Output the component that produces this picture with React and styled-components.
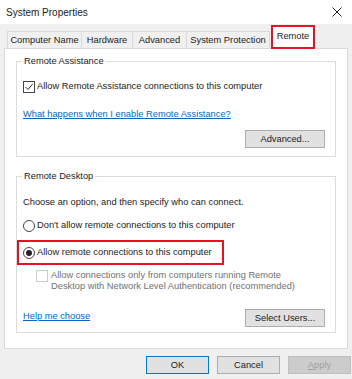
import React from "react";
import styled, { createGlobalStyle } from "styled-components";

const GlobalStyle = createGlobalStyle`
  html, body {
    margin: 0;
    padding: 0;
    background: #f0f0f0;
  }
  * {
    box-sizing: border-box;
  }
`;

const tabs = [
  { label: "Computer Name", width: 75 },
  { label: "Hardware", width: 51 },
  { label: "Advanced", width: 54 },
  { label: "System Protection", width: 83 },
];

export const App = () => {
  return (
    <Window>
      <GlobalStyle />
      <TitleBar>
        <Title>System Properties</Title>
        <CloseIcon viewBox="0 0 10 10">
          <path d="M0.5 0.5 L9.5 9.5 M9.5 0.5 L0.5 9.5" stroke="#222" strokeWidth="1" />
        </CloseIcon>
      </TitleBar>

      <TabRow>
        {tabs.map((tab, i) => (
          <Tab key={tab.label} $w={tab.width} $first={i === 0}>
            {tab.label}
          </Tab>
        ))}
        <ActiveTab>Remote</ActiveTab>
      </TabRow>

      <Panel>
        <Group $h={96}>
          <Legend>Remote Assistance</Legend>
          <OptionRow $top={18}>
            <CheckBox>
              <svg width="10" height="10" viewBox="0 0 10 10">
                <path d="M1.5 5 L4 7.5 L8.8 1.8" fill="none" stroke="#333" strokeWidth="1" />
              </svg>
            </CheckBox>
            <Label>Allow Remote Assistance connections to this computer</Label>
          </OptionRow>
          <LinkText $top={15}>What happens when I enable Remote Assistance?</LinkText>
          <ButtonRow $top={10}>
            <span />
            <Button>Advanced...</Button>
          </ButtonRow>
        </Group>

        <Group $h={157} $top={19}>
          <Legend>Remote Desktop</Legend>
          <Text $top={19}>Choose an option, and then specify who can connect.</Text>
          <OptionRow $top={11}>
            <Radio />
            <Label>Don't allow remote connections to this computer</Label>
          </OptionRow>
          <Highlight>
            <OptionRow>
              <Radio $checked />
              <Label>Allow remote connections to this computer</Label>
            </OptionRow>
          </Highlight>
          <SubOption>
            <CheckBox $disabled />
            <MutedText>
              Allow connections only from computers running Remote
              <br />
              Desktop with Network Level Authentication (recommended)
            </MutedText>
          </SubOption>
          <ButtonRow $top={18}>
            <LinkText $top={1}>Help me choose</LinkText>
            <Button>Select Users...</Button>
          </ButtonRow>
        </Group>
      </Panel>

      <Footer>
        <DialogButton $primary>OK</DialogButton>
        <DialogButton>Cancel</DialogButton>
        <DialogButton $disabled>
          <u>A</u>pply
        </DialogButton>
      </Footer>
    </Window>
  );
};

const Window = styled.div`
  width: 352px;
  height: 379px;
  background: #f0f0f0;
  font-family: "Liberation Sans", Arial, sans-serif;
  font-size: 9.3px;
  color: #222;
  display: flex;
  flex-direction: column;
  overflow: hidden;
`;

const TitleBar = styled.div`
  height: 24px;
  background: #fff;
  display: flex;
  align-items: center;
  justify-content: space-between;
  padding: 0 10px 0 6px;
`;

const Title = styled.div`
  font-size: 10px;
  color: #222;
`;

const CloseIcon = styled.svg`
  width: 10px;
  height: 10px;
`;

const TabRow = styled.div`
  display: flex;
  align-items: flex-end;
  height: 24px;
  padding-left: 7px;
  position: relative;
  z-index: 1;
`;

const Tab = styled.div`
  width: ${(p) => p.$w}px;
  height: 17px;
  border: 1px solid #d9d9d9;
  border-bottom: none;
  border-left-width: ${(p) => (p.$first ? 1 : 0)}px;
  background: #f0f0f0;
  display: flex;
  align-items: center;
  justify-content: center;
  white-space: nowrap;
`;

const ActiveTab = styled.div`
  width: 44px;
  height: 24px;
  margin-left: 1px;
  margin-bottom: -1px;
  border: 2px solid #e81123;
  background: #fff;
  display: flex;
  align-items: center;
  justify-content: center;
  padding-bottom: 2px;
  white-space: nowrap;
`;

const Panel = styled.div`
  height: 301px;
  margin: 0 4px;
  background: #fff;
  border: 1px solid #d9d9d9;
  padding: 12px 11px 0 11px;
  display: flex;
  flex-direction: column;
`;

const Group = styled.div`
  position: relative;
  height: ${(p) => p.$h}px;
  margin-top: ${(p) => p.$top || 0}px;
  border: 1px solid #dcdcdc;
  padding: 0 10px 0 6px;
  display: flex;
  flex-direction: column;
`;

const Legend = styled.div`
  position: absolute;
  top: -7px;
  left: 5px;
  padding: 0 2px;
  background: #fff;
  line-height: 12px;
`;

const OptionRow = styled.div`
  display: flex;
  align-items: center;
  height: 13px;
  gap: 2px;
  margin-top: ${(p) => p.$top || 0}px;
`;

const CheckBox = styled.div`
  width: 12px;
  height: 12px;
  flex: none;
  border: 1px solid ${(p) => (p.$disabled ? "#cccccc" : "#444")};
  background: #fff;
  display: flex;
  align-items: center;
  justify-content: center;
`;

const Radio = styled.div`
  width: 12px;
  height: 12px;
  flex: none;
  border-radius: 50%;
  border: 1px solid #444;
  background: #fff;
  display: flex;
  align-items: center;
  justify-content: center;
  &::after {
    content: "";
    display: ${(p) => (p.$checked ? "block" : "none")};
    width: 6px;
    height: 6px;
    border-radius: 50%;
    background: #222;
  }
`;

const Label = styled.span`
  white-space: nowrap;
  line-height: 13px;
`;

const Text = styled.div`
  margin-top: ${(p) => p.$top || 0}px;
  line-height: 12px;
  white-space: nowrap;
`;

const LinkText = styled.div`
  margin-top: ${(p) => p.$top || 0}px;
  line-height: 12px;
  color: #0066cc;
  text-decoration: underline;
  white-space: nowrap;
  align-self: flex-start;
`;

const Highlight = styled.div`
  width: 207px;
  height: 25px;
  margin: 8px 0 0 -6px;
  border: 2px solid #e81123;
  padding-left: 4px;
  display: flex;
  align-items: center;
`;

const SubOption = styled.div`
  display: flex;
  align-items: flex-start;
  gap: 3px;
  margin: 5px 0 0 13px;
`;

const MutedText = styled.div`
  color: #707070;
  line-height: 10.5px;
  white-space: nowrap;
`;

const ButtonRow = styled.div`
  display: flex;
  justify-content: space-between;
  align-items: center;
  margin-top: ${(p) => p.$top || 0}px;
`;

const Button = styled.div`
  width: 80px;
  height: 18px;
  background: #e1e1e1;
  border: 1px solid #adadad;
  display: flex;
  align-items: center;
  justify-content: center;
  white-space: nowrap;
`;

const Footer = styled.div`
  display: flex;
  justify-content: flex-end;
  gap: 8px;
  margin-top: 7px;
  padding-right: 1px;
`;

const DialogButton = styled.div`
  width: 63px;
  height: 18px;
  background: ${(p) => (p.$disabled ? "#cccccc" : "#e1e1e1")};
  border: 1px solid ${(p) => (p.$primary ? "#0078d7" : p.$disabled ? "#bfbfbf" : "#adadad")};
  color: ${(p) => (p.$disabled ? "#a0a0a0" : "#222")};
  display: flex;
  align-items: center;
  justify-content: center;
  & u {
    text-decoration: underline;
  }
`;

export default App;
